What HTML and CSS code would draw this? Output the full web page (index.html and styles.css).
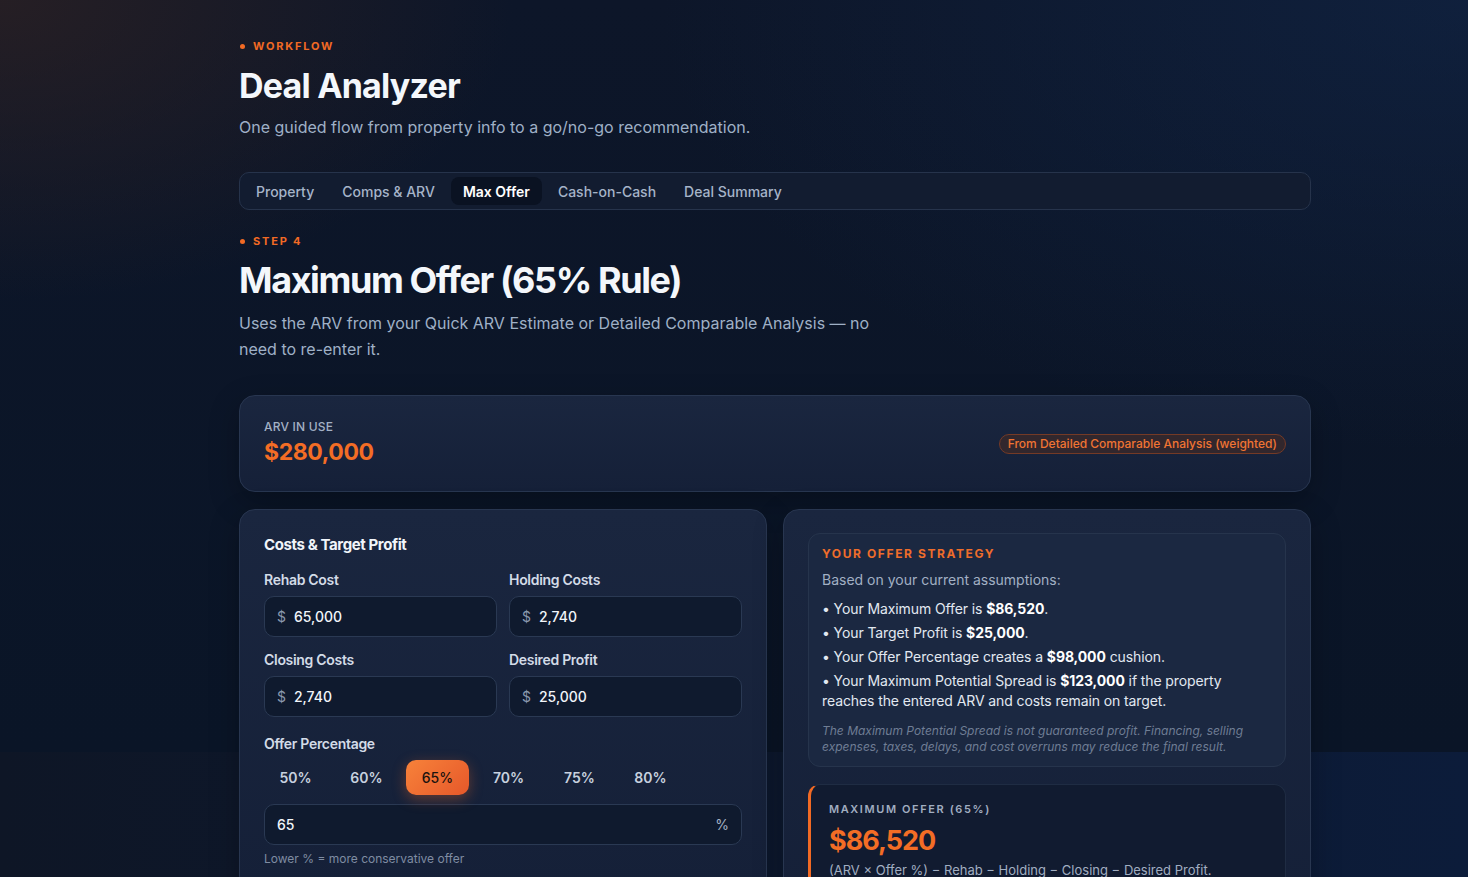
FILE: index.html
```html
<!DOCTYPE html>
<html lang="en">
<head>
<meta charset="utf-8">
<title>Deal Analyzer</title>
<link rel="stylesheet" href="styles.css">
</head>
<body>
<main class="page">
  <header class="intro">
    <div class="eyebrow"><span class="dot"></span>WORKFLOW</div>
    <h1 class="title">Deal Analyzer</h1>
    <p class="lead">One guided flow from property info to a go/no-go recommendation.</p>
  </header>

  <nav class="tabs">
    <span class="tab">Property</span>
    <span class="tab">Comps &amp; ARV</span>
    <span class="tab active">Max Offer</span>
    <span class="tab">Cash-on-Cash</span>
    <span class="tab">Deal Summary</span>
  </nav>

  <section class="step">
    <div class="eyebrow"><span class="dot"></span>STEP 4</div>
    <h2 class="step-title">Maximum Offer (65% Rule)</h2>
    <p class="step-desc">Uses the ARV from your Quick ARV Estimate or Detailed Comparable Analysis — no need to re-enter it.</p>
  </section>

  <section class="card arv-card">
    <div class="arv-info">
      <div class="arv-label">ARV IN USE</div>
      <div class="arv-value">$280,000</div>
    </div>
    <span class="badge">From Detailed Comparable Analysis (weighted)</span>
  </section>

  <div class="columns">
    <section class="card costs">
      <h3 class="card-title">Costs &amp; Target Profit</h3>
      <div class="fields">
        <div class="field">
          <label class="field-label">Rehab Cost</label>
          <div class="input"><span class="prefix">$</span><span class="val">65,000</span></div>
        </div>
        <div class="field">
          <label class="field-label">Holding Costs</label>
          <div class="input"><span class="prefix">$</span><span class="val">2,740</span></div>
        </div>
        <div class="field">
          <label class="field-label">Closing Costs</label>
          <div class="input"><span class="prefix">$</span><span class="val">2,740</span></div>
        </div>
        <div class="field">
          <label class="field-label">Desired Profit</label>
          <div class="input"><span class="prefix">$</span><span class="val">25,000</span></div>
        </div>
      </div>
      <div class="field pct-field">
        <label class="field-label">Offer Percentage</label>
        <div class="chips">
          <span class="chip">50%</span>
          <span class="chip">60%</span>
          <span class="chip active">65%</span>
          <span class="chip">70%</span>
          <span class="chip">75%</span>
          <span class="chip">80%</span>
        </div>
        <div class="input pct-input"><span class="val">65</span><span class="suffix">%</span></div>
        <p class="hint">Lower % = more conservative offer</p>
      </div>
    </section>

    <section class="card results">
      <div class="strategy">
        <div class="strategy-title">YOUR OFFER STRATEGY</div>
        <p class="strategy-intro">Based on your current assumptions:</p>
        <ul class="bullets">
          <li>• Your Maximum Offer is <b>$86,520</b>.</li>
          <li>• Your Target Profit is <b>$25,000</b>.</li>
          <li>• Your Offer Percentage creates a <b>$98,000</b> cushion.</li>
          <li>• Your Maximum Potential Spread is <b>$123,000</b> if the property reaches the entered ARV and costs remain on target.</li>
        </ul>
        <p class="note">The Maximum Potential Spread is not guaranteed profit. Financing, selling expenses, taxes, delays, and cost overruns may reduce the final result.</p>
      </div>
      <div class="max-offer">
        <div class="mo-label">MAXIMUM OFFER (65%)</div>
        <div class="mo-value">$86,520</div>
        <div class="mo-formula">(ARV × Offer %) − Rehab − Holding − Closing − Desired Profit.</div>
      </div>
    </section>
  </div>
</main>
</body>
</html>
```

FILE: styles.css
```css
* { box-sizing: border-box; }

html {
  background:
    radial-gradient(ellipse 35% 40% at 0% 0%, rgba(48, 34, 34, 0.7), rgba(48, 34, 34, 0) 100%) 0 0 / 100% 752px no-repeat,
    radial-gradient(ellipse 55% 60% at 100% 0%, rgba(18, 42, 80, 0.5), rgba(18, 42, 80, 0) 100%) 0 0 / 100% 752px no-repeat,
    linear-gradient(180deg, #0d1629 0px, #0a1527 752px, transparent 752px) 0 0 / 100% 752px no-repeat,
    linear-gradient(90deg, #0e1626 0%, #0d1a33 70%, #0c1c3a 100%);
  min-height: 100%;
}

body {
  margin: 0;
  font-family: Inter, "Noto Sans", "Liberation Sans", sans-serif;
  color: #e6ecf5;
}

.page {
  width: 1072px;
  margin-left: 239px;
  padding-top: 40px;
  padding-bottom: 40px;
}

.eyebrow {
  display: flex;
  align-items: center;
  gap: 8px;
  font-size: 11px;
  font-weight: 700;
  letter-spacing: 1.8px;
  color: #f26a24;
  line-height: 12px;
}

.dot {
  width: 5px;
  height: 5px;
  border-radius: 50%;
  background: #f26a24;
  margin-left: 1px;
}

.title {
  margin: 14px 0 0;
  font-size: 34px;
  line-height: 40px;
  font-weight: 700;
  letter-spacing: -0.8px;
  color: #f4f7fb;
}

.lead {
  margin: 9px 0 0;
  font-size: 16px;
  line-height: 24px;
  color: #9fb0c6;
}

.tabs {
  margin-top: 33px;
  display: flex;
  gap: 4px;
  padding: 4px;
  height: 38px;
  border: 1px solid #26334b;
  border-radius: 10px;
  background: #121c30;
}

.tab {
  display: flex;
  align-items: center;
  padding: 0 12px;
  height: 28px;
  font-size: 14px;
  font-weight: 500;
  color: #a6b4c9;
  border-radius: 8px;
}

.tab.active {
  background: #0a1222;
  color: #ffffff;
  font-weight: 600;
}

.step { margin-top: 25px; }

.step-title {
  margin: 12px 0 0;
  font-size: 36px;
  line-height: 42px;
  font-weight: 700;
  letter-spacing: -1.4px;
  color: #f4f7fb;
}

.step-desc {
  margin: 9px 0 0;
  max-width: 640px;
  font-size: 16px;
  line-height: 26px;
  color: #9fb0c6;
}

.card {
  border: 1px solid #283650;
  border-radius: 16px;
  background: linear-gradient(180deg, #1a263f 0%, #152038 100%);
  box-shadow: 0 10px 30px rgba(0, 0, 0, 0.25);
}

.arv-card {
  margin-top: 33px;
  display: flex;
  align-items: center;
  justify-content: space-between;
  padding: 23px 24px 24px;
}

.arv-label {
  font-size: 12px;
  line-height: 16px;
  font-weight: 500;
  color: #a3b1c5;
  letter-spacing: 0.2px;
}

.arv-value {
  margin-top: 2px;
  font-size: 23px;
  line-height: 30px;
  font-weight: 700;
  color: #f36d25;
  letter-spacing: -0.4px;
}

.badge {
  margin-top: 1px;
  font-size: 12px;
  line-height: 18px;
  font-weight: 500;
  color: #f07433;
  padding: 0 8px;
  border: 1px solid #743a26;
  border-radius: 999px;
  background: #32272d;
}

.columns {
  margin-top: 17px;
  display: grid;
  grid-template-columns: 1fr 1fr;
  gap: 16px;
  align-items: start;
}

.costs { padding: 24px 24px 24px; }

.card-title {
  margin: 0;
  font-size: 15px;
  line-height: 22px;
  font-weight: 700;
  letter-spacing: -0.4px;
  color: #f1f5fa;
}

.fields {
  margin-top: 15px;
  display: grid;
  grid-template-columns: 1fr 1fr;
  column-gap: 12px;
  row-gap: 14px;
}

.field-label {
  display: block;
  font-size: 14px;
  line-height: 18px;
  font-weight: 600;
  color: #d3dbe7;
  letter-spacing: -0.3px;
  margin-bottom: 7px;
}

.input {
  display: flex;
  align-items: center;
  gap: 8px;
  height: 41px;
  padding: 0 12px;
  border: 1px solid #2a3953;
  border-radius: 10px;
  background: #0f1a2e;
  font-size: 14px;
  color: #f1f5fa;
}

.prefix { color: #8b99ae; }
.val { font-weight: 500; }

.pct-field { margin-top: 18px; }

.chips {
  display: flex;
  gap: 8px;
  margin-top: 7px;
}

.chip {
  width: 63px;
  height: 35px;
  display: flex;
  align-items: center;
  justify-content: center;
  font-size: 14px;
  font-weight: 600;
  color: #c7d1df;
  border-radius: 10px;
}

.chip.active {
  background: linear-gradient(135deg, #f7823a 0%, #e6582a 100%);
  color: #1b130f;
  font-weight: 500;
  box-shadow: 0 4px 14px rgba(242, 106, 36, 0.35);
}

.pct-input {
  margin-top: 9px;
  justify-content: space-between;
  padding: 0 12px 0 12px;
}

.suffix { color: #a6b3c5; }

.hint {
  margin: 6px 0 0;
  font-size: 12px;
  line-height: 16px;
  color: #7f8ca2;
}

.results {
  padding: 23px 24px 24px;
  display: flex;
  flex-direction: column;
  gap: 17px;
}

.strategy {
  padding: 12px 13px 11px;
  border: 1px solid #26344c;
  border-radius: 12px;
  background: #1b2841;
}

.strategy-title {
  font-size: 12px;
  line-height: 16px;
  font-weight: 700;
  letter-spacing: 1.6px;
  color: #ef6d2b;
}

.strategy-intro {
  margin: 8px 0 0;
  font-size: 14px;
  line-height: 20px;
  color: #a2b0c4;
}

.bullets {
  list-style: none;
  margin: 9px 0 0;
  padding: 0;
  display: flex;
  flex-direction: column;
  gap: 4px;
}

.bullets li {
  font-size: 14px;
  line-height: 20px;
  color: #e2e8f1;
  letter-spacing: -0.1px;
}

.bullets b { color: #ffffff; font-weight: 700; }

.note {
  margin: 12px 0 0;
  font-size: 12px;
  line-height: 16px;
  font-style: italic;
  color: #6f7d94;
}

.max-offer {
  padding: 16px 20px 16px 18px;
  border: 1px solid #1f2c43;
  border-left: 3px solid #f26a24;
  border-radius: 12px;
  background: #111b30;
}

.mo-label {
  font-size: 11px;
  line-height: 16px;
  font-weight: 600;
  letter-spacing: 1.6px;
  color: #a1aec1;
}

.mo-value {
  margin-top: 7px;
  font-size: 27px;
  line-height: 34px;
  font-weight: 700;
  letter-spacing: -1px;
  color: #f36d25;
}

.mo-formula {
  margin-top: 3px;
  font-size: 13px;
  line-height: 18px;
  color: #a1aec1;
}
```
